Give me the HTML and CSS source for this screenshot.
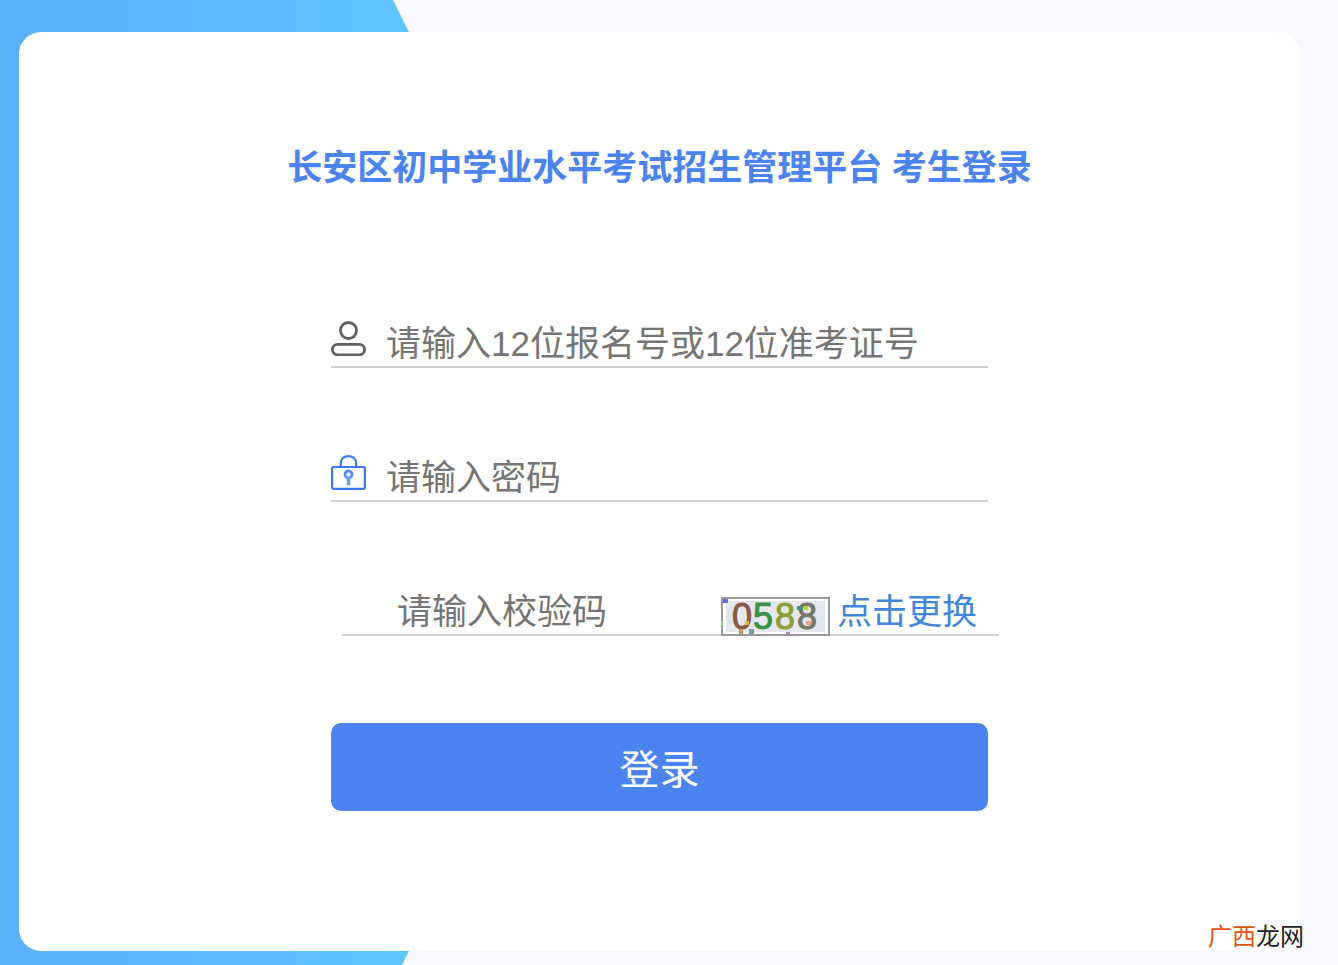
FILE: index.html
```
<!DOCTYPE html>
<html lang="zh-CN">

<head>
  <meta charset="UTF-8">
  <meta name="viewport" content="width=device-width, initial-scale=1">
  <title>考生登录</title>
  <link rel="stylesheet" href="styles.css">
</head>

<body>
  <div class="bg-shape"></div>

  <main class="login-box">
    <h1 class="title">长安区初中学业水平考试招生管理平台 考生登录</h1>

    <form class="login-form">
      <div class="field">
        <label class="icon" for="username" aria-label="报名号">
          <svg width="35" height="35" viewBox="0 0 35 35" fill="none" stroke="#606060" stroke-width="2.8">
            <circle cx="17.5" cy="9.5" r="8"/>
            <rect x="1.4" y="23.4" width="32.2" height="10.4" rx="5.2"/>
          </svg>
        </label>
        <input type="text" id="username" placeholder="请输入12位报名号或12位准考证号">
      </div>

      <div class="field">
        <label class="icon" for="password" aria-label="密码">
          <svg width="35" height="35" viewBox="0 0 35 35" fill="none" stroke="#3b78f3" stroke-width="2.2">
            <rect x="1.1" y="12" width="32.8" height="21.8" rx="1.5"/>
            <path d="M9.8 12V8.5C9.8 4 13 1.2 17.5 1.2S25.2 4 25.2 8.5V12"/>
            <circle cx="17.5" cy="19.5" r="3.5" stroke="#5a8df4" stroke-width="2.8"/>
            <path d="M17.5 22V30.500" stroke="#6f9cf5" stroke-width="3.600"/>
          </svg>
        </label>
        <input type="password" id="password" placeholder="请输入密码">
      </div>

      <div class="field field-code">
        <label class="icon" for="code" aria-label="校验码"></label>
        <input type="text" id="code" placeholder="请输入校验码">
        <svg class="captcha" width="109" height="39" viewBox="0 0 109 39">
          <rect x="1" y="1" width="107" height="37" fill="#fff" stroke="#999" stroke-width="2"/>
          <rect x="5" y="4" width="99" height="31" fill="#e4e8ee"/>
          <g class="digits">
            <text x="11" y="32" fill="#8a5a48" stroke="#8a5a48">0</text>
            <text x="32" y="32" fill="#3c9148" stroke="#3c9148">5</text>
            <text x="54" y="32" fill="#8f9e35" stroke="#8f9e35">8</text>
            <text x="76" y="32" fill="#77766a" stroke="#77766a">8</text>
          </g>
          <rect x="2" y="2" width="5" height="4" fill="#6a6af0"/>
          <rect x="0" y="24" width="2" height="4" fill="#7fe87f"/>
          <rect x="18" y="32" width="4" height="5" fill="#c79a55"/>
          <rect x="24" y="24" width="4" height="4" fill="#dcb832"/>
          <rect x="28" y="32" width="5" height="5" fill="#6ba0aa"/>
          <rect x="65" y="35" width="4" height="4" fill="#a78bc0"/>
          <rect x="76" y="9" width="4" height="4" fill="#2f9b80"/>
          <rect x="83" y="9" width="4" height="4" fill="#b5d732"/>
          <rect x="85" y="24" width="5" height="4" fill="#e5a294"/>
        </svg>
        <a class="change" href="#">点击更换</a>
      </div>

      <button type="submit" class="btn-login">登录</button>
    </form>
  </main>

  <div class="watermark"><span>广西</span>龙网</div>
</body>

</html>
```
FILE: styles.css
```
* {
  box-sizing: border-box;
}

body {
  position: relative;
  display: flex;
  min-height: 100vh;
  margin: 0;
  padding: 32px 38px 14px 19px;
  background-color: #f8f9fe;
  font-family: "Liberation Sans", "Noto Sans CJK SC", sans-serif;
}

/* blue arrow behind the box */
.bg-shape {
  position: absolute;
  top: 0;
  left: 0;
  width: 638px;
  height: 100%;
  background: linear-gradient(to right, #5ab0fa, #5cb9ff 30%, #5fc5ff 64%);
  clip-path: polygon(0 0, 393px 0, 100% 51%, 402px 100%, 0 100%);
}

.login-box {
  position: relative;
  flex: 1;
  padding: 111px 20px 80px;
  background-color: #fff;
  border-radius: 22px;
}

.title {
  margin: 0 0 125px;
  color: #4b83f0;
  font-size: 35px;
  line-height: 50px;
  text-align: center;
}

.login-form {
  max-width: 657px;
  margin: 0 auto;
}

.field {
  display: flex;
  align-items: flex-start;
  margin-bottom: 84px;
  border-bottom: 2px solid #d2d2d2;
}

.field-code {
  margin: 0 -11px 87px 11px;
}

.icon {
  flex: none;
  width: 35px;
  height: 35px;
  margin: 3px 20px 0 0;
}

.icon svg {
  display: block;
}

.field input {
  flex: 1;
  min-width: 0;
  height: 48px;
  padding: 3px 0 0;
  border: none;
  outline: none;
  background: transparent;
  color: #333;
  font-family: inherit;
  font-size: 35px;
}

.field input::placeholder {
  color: #757575;
}

.captcha {
  flex: none;
  align-self: flex-end;
  margin: 0 7px -2px 0;
}

.digits {
  font-family: "Liberation Sans", sans-serif;
  font-size: 36px;
  stroke-width: 1px;
}

.change {
  height: 48px;
  padding-top: 2px;
  margin-right: 22px;
  color: #4285d9;
  font-size: 35px;
  line-height: 48px;
  text-decoration: none;
}

.btn-login {
  width: 100%;
  height: 88px;
  border: none;
  border-radius: 10px;
  background-color: #4b83f0;
  color: #fff;
  font-family: inherit;
  font-size: 40px;
  cursor: pointer;
}

.watermark {
  position: absolute;
  right: 34px;
  bottom: 12px;
  color: #222;
  font-size: 24px;
  line-height: 32px;
}

.watermark span {
  color: #e0560f;
}
```
